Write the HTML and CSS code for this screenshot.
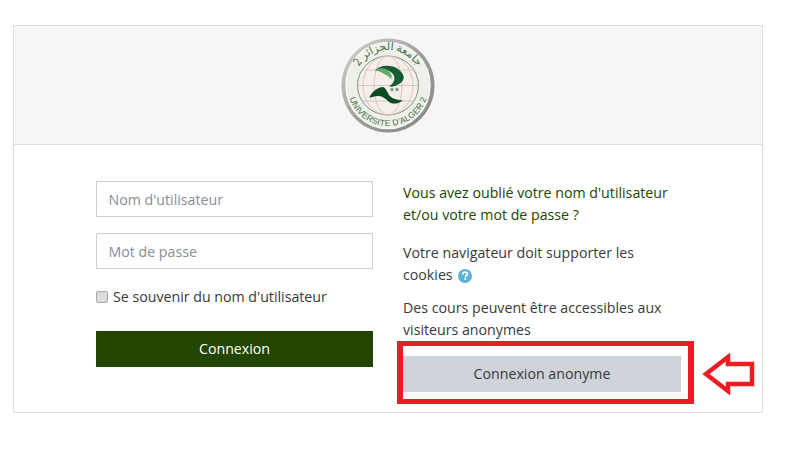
FILE: index.html
```html
<!DOCTYPE html>
<html lang="fr">
<head>
<meta charset="utf-8">
<title>Connexion</title>
<link rel="stylesheet" href="styles.css">
</head>
<body>
<main class="card">
  <header class="card-head">
    <svg class="logo" width="94" height="95" viewBox="0 0 94 95" aria-label="Université d'Alger 2">
      <defs>
        <path id="arcTop" d="M13 47 A34 35 0 0 1 81 47"/>
        <path id="arcBottom" d="M6 47 A41 41 0 0 0 88 47"/>
        <linearGradient id="ring" x1="0" y1="0" x2="1" y2="1">
          <stop offset="0" stop-color="#d6d6d3"/>
          <stop offset=".5" stop-color="#9d9f9a"/>
          <stop offset="1" stop-color="#83857f"/>
        </linearGradient>
      </defs>
      <ellipse cx="47" cy="47.500" rx="46.500" ry="47" fill="url(#ring)"/>
      <ellipse cx="47" cy="47.500" rx="42" ry="43" fill="#eef1ea" stroke="#f8f8f6" stroke-width="1.500"/>
      <ellipse cx="47" cy="47.500" rx="30.500" ry="29.500" fill="#f4efe9" stroke="#7f927a" stroke-width="1"/>
      <g fill="none" stroke="#d9bfb4" stroke-width=".9">
        <ellipse cx="47" cy="47.500" rx="14" ry="29.500"/>
        <ellipse cx="47" cy="47.500" rx="25" ry="29.500"/>
        <path d="M17 47.500H77M21 32H73M21 63H73"/>
      </g>
      <path d="M34 33C38 27 50 26 57 31C64 36 65 42 58 46C55 48 52 49 48 48.500C53 45 55 41 52 36C49 32 44 31 40 32C38 32 36 32 34 33Z" fill="#155c33"/>
      <path d="M35 32C40 29 47 30 50 36C51 38 51 39 50 41C47 37 41 35 35 32Z" fill="#62ab68"/>
      <path d="M28.500 60C30 54 36 50 41 49C45 49 46 54 48 57C50 60 55 62 62 62.500C57 66 51 67 47 63C44 60 41 58 37 58C34 58 31 59 28.500 60Z" fill="#0f4a26"/>
      <circle cx="51" cy="51.500" r="1.700" fill="#7d9b84"/>
      <circle cx="56" cy="51.500" r="1.700" fill="#7d9b84"/>
      <text class="logo-ar" dir="rtl"><textPath href="#arcTop" startOffset="50%" text-anchor="middle">جامعة الجزائر 2</textPath></text>
      <text class="logo-fr"><textPath href="#arcBottom" startOffset="50%" text-anchor="middle">UNIVERSITE D'ALGER 2</textPath></text>
    </svg>
  </header>
  <section class="card-body">
    <form class="login-form">
      <input class="field" type="text" placeholder="Nom d'utilisateur">
      <input class="field" type="password" placeholder="Mot de passe">
      <label class="remember"><input class="check" type="checkbox"><span>Se souvenir du nom d'utilisateur</span></label>
      <button class="btn btn-primary" type="button">Connexion</button>
    </form>
    <div class="info">
      <p class="info-p"><a class="link" href="#">Vous avez oublié votre nom d'utilisateur et/ou votre mot de passe ?</a></p>
      <p class="info-p">Votre navigateur doit supporter les cookies
        <svg class="help" width="14" height="14" viewBox="0 0 14 14" aria-hidden="true"><circle cx="7" cy="7" r="7" fill="#5bb3d3"/><path d="M4.700 5.400C4.800 4 5.800 3.200 7.100 3.200C8.500 3.200 9.400 4 9.400 5.100C9.400 6.600 7.300 6.700 7.300 8.200" fill="none" stroke="#fff" stroke-width="1.700"/><rect x="6.300" y="9.200" width="1.900" height="1.800" fill="#fff"/></svg>
      </p>
      <p class="info-p info-last">Des cours peuvent être accessibles aux visiteurs anonymes</p>
      <button class="btn btn-guest" type="button">Connexion anonyme</button>
    </div>
  </section>
</main>
<div class="highlight"></div>
<svg class="arrow" width="54" height="42" viewBox="0 0 54 42" aria-hidden="true"><path d="M4 21L26 4V11H50V31H26V38Z" fill="#fff" stroke="#ec1c24" stroke-width="4.500"/></svg>
</body>
</html>
```
FILE: styles.css
```css
* { box-sizing: border-box; }
html, body { margin: 0; background: #fff; }
body { position: relative; height: 451px; overflow: hidden; font-family: "Open Sans", "Liberation Sans", sans-serif; font-size: 14.2px; line-height: 22px; color: #373a3c; }
.card { width: 750px; height: 388px; margin: 25px 0 0 13px; border: 1px solid #dfdfdf; display: flex; flex-direction: column; }
.card-head { height: 119px; background: #f6f6f6; border-bottom: 1px solid #dfdfdf; display: flex; justify-content: center; align-items: center; }
.logo { display: block; }
.logo-ar { font-family: "Noto Sans CJK SC", "DejaVu Sans", sans-serif; font-size: 11px; fill: #4b6a4a; }
.logo-fr { font-family: "Liberation Sans", sans-serif; font-size: 8.500px; letter-spacing: .2px; fill: #3f6a45; }
.card-body { display: flex; padding: 36px 0 0 82px; gap: 30px; }
.login-form { width: 277px; display: flex; flex-direction: column; }
.field { width: 100%; height: 36px; border: 1px solid #cfcfcf; padding: 0 11.500px; margin-bottom: 16px; font: inherit; color: #373a3c; background: #fff; border-radius: 0; outline: none; }
.field::placeholder { color: #868e96; opacity: 1; }
.remember { display: flex; align-items: center; height: 22px; margin-top: 1px; color: #373a3c; }
.check { appearance: none; width: 12px; height: 12px; margin: 0 5px 0 0; background: #dcdcdc; border: 1px solid #a8a8a8; border-radius: 2px; }
.btn { border: 0; border-radius: 0; height: 36px; font: inherit; cursor: pointer; padding: 0; }
.btn-primary { margin-top: 23px; background: #224500; color: #fff; }
.info { width: 276px; padding-top: 1px; }
.info-p { margin: 0 0 16px; }
.info-last { margin: -5px 0 15px; }
.link { color: #224500; text-decoration: none; }
.help { vertical-align: -3px; margin-left: 2px; }
.btn-guest { display: block; width: 278px; background: #ced4da; color: #373a3c; }
.highlight { position: absolute; left: 397px; top: 341px; width: 297px; height: 63px; border: 5px solid #ec1c24; border-left-width: 6px; border-right-width: 6px; }
.arrow { position: absolute; left: 702px; top: 353px; }
```
